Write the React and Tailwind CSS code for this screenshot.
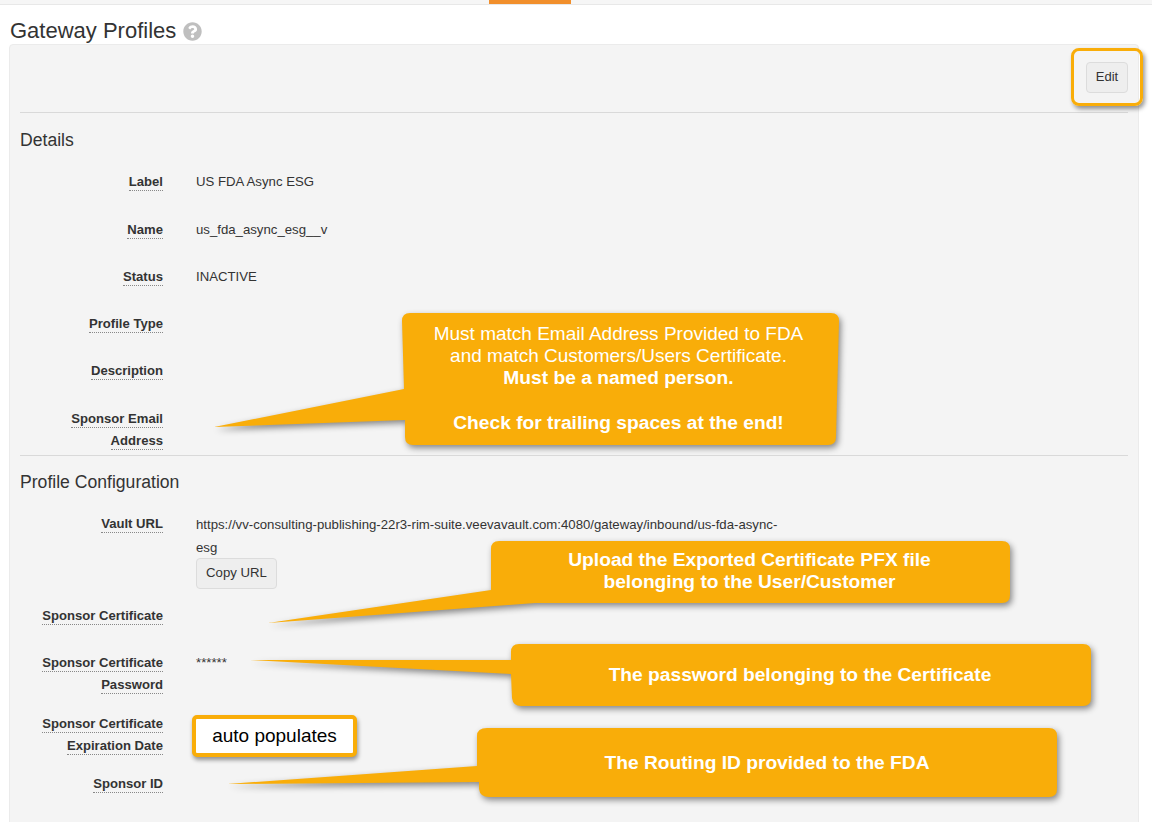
import React from 'react';
import { FaQuestionCircle } from 'react-icons/fa';

const Row = ({ label, children, cls }) => (
  <div className={`flex ${cls}`}>
    <div className="w-[143px] shrink-0 pl-[18px] text-right leading-[22px] text-[13.1px] font-bold text-[#333]">
      <span className="border-b border-dotted border-[#888] pb-[1px]">{label}</span>
    </div>
    <div className="ml-[33px] w-[590px] leading-[22px] text-[#333]">{children}</div>
  </div>
);

const Shape = ({ d }) => (
  <svg className="absolute left-0 top-0 w-[1152px] h-[822px] pointer-events-none drop-shadow-[2px_3px_3px_rgba(0,0,0,0.45)]" viewBox="0 0 1152 822">
    <path d={d} fill="#f9ad09" />
  </svg>
);

export default function App() {
  return (
    <div className="relative w-[1152px] h-[822px] overflow-hidden bg-white text-[13.2px] font-['Liberation_Sans',Arial,sans-serif]">
      <div className="h-[5px] bg-[#f6f6f6] border-b border-[#e8e8e8] flex">
        <div className="ml-[489px] w-[82px] h-[4px] bg-[#f18f2c]" />
      </div>
      <div className="ml-[10px] mt-[12px] h-[27px] flex items-center gap-[7px]">
        <span className="text-[22px] leading-[27px] text-[#333]">Gateway Profiles</span>
        <FaQuestionCircle className="text-[#bfbfbf] w-[19px] h-[19px] mt-[1px]" />
      </div>
      <div className="ml-[9px] w-[1130px] h-[800px] bg-[#f4f4f4] border border-[#ebebeb] rounded-[4px] px-[10px]">
        <div className="h-[68px] border-b border-[#d9d9d9] flex justify-end items-start pt-[17px]">
          <button className="w-[42px] h-[31px] pb-[2px] bg-[#eeeeee] border border-[#dcdcdc] rounded-[4px] text-[13px] text-[#333]">Edit</button>
        </div>
        <div className="text-[17.6px] leading-[22px] text-[#333] mt-[16px]">Details</div>
        <Row label="Label" cls="mt-[20px] h-[48px]">US FDA Async ESG</Row>
        <Row label="Name" cls="h-[47px]">us_fda_async_esg__v</Row>
        <Row label="Status" cls="h-[47px]">INACTIVE</Row>
        <Row label="Profile Type" cls="h-[47px]" />
        <Row label="Description" cls="h-[48px]" />
        <Row label="Sponsor Email Address" cls="h-[47px]" />
        <div className="border-t border-[#d9d9d9]" />
        <div className="text-[17.6px] leading-[22px] text-[#333] mt-[15px]">Profile Configuration</div>
        <Row label="Vault URL" cls="mt-[20px] h-[92px]">
          <div className="leading-[23px] whitespace-nowrap">https://vv-consulting-publishing-22r3-rim-suite.veevavault.com:4080/gateway/inbound/us-fda-async-</div>
          <div className="leading-[23px]">esg</div>
          <button className="block -mt-[1px] w-[81px] h-[31px] pb-[1px] bg-[#eeeeee] border border-[#dcdcdc] rounded-[4px] text-[#333]">Copy URL</button>
        </Row>
        <Row label="Sponsor Certificate" cls="h-[47px]" />
        <Row label="Sponsor Certificate Password" cls="h-[61px]">******</Row>
        <Row label="Sponsor Certificate Expiration Date" cls="h-[60px]" />
        <Row label="Sponsor ID" />
      </div>

      <div className="absolute left-[1071px] top-[48px] w-[72px] h-[58px] border-[3px] border-[#f9ad09] rounded-[8px] shadow-[2px_3px_4px_rgba(0,0,0,0.4)]" />

      <Shape d="M410 313H831Q839 313 839 321L836 437Q836 445 828 445H413Q405 445 405 437L405 420L214 427L404 389L402 321Q402 313 410 313Z" />
      <div className="absolute left-[400px] top-[323px] w-[437px] text-center text-white text-[19px] leading-[22px]">
        <div>Must match Email Address Provided to FDA</div>
        <div>and match Customers/Users Certificate.</div>
        <div className="font-bold text-[19.2px]">Must be a named person.</div>
        <div className="font-bold text-[19.2px] mt-[23px]">Check for trailing spaces at the end!</div>
      </div>

      <Shape d="M499 541H1002Q1010 541 1010 549V595Q1010 603 1002 603H535L268 623L491 590V549Q491 541 499 541Z" />
      <div className="absolute left-[490px] top-[549px] w-[519px] text-center text-white text-[19.2px] leading-[22px] font-bold">
        <div>Upload the Exported Certificate PFX file</div>
        <div>belonging to the User/Customer</div>
      </div>

      <Shape d="M519 644H1083Q1091 644 1091 652V698Q1091 706 1083 706H521Q513 706 512 698L511 674L250 660H511V652Q511 644 519 644Z" />
      <div className="absolute left-[511px] top-[663px] w-[578px] text-center text-white text-[19.2px] leading-[23px] font-bold">The password belonging to the Certificate</div>

      <Shape d="M487 728H1049Q1057 728 1057 736V789Q1057 797 1049 797H489Q480 797 479 789L479 782L227 784L477 766V736Q477 728 487 728Z" />
      <div className="absolute left-[477px] top-[751px] w-[580px] text-center text-white text-[19.2px] leading-[23px] font-bold">The Routing ID provided to the FDA</div>

      <div className="absolute left-[192px] top-[715px] w-[165px] h-[42px] bg-white border-[4px] border-[#f9ad09] rounded-[5px] shadow-[1px_3px_4px_rgba(0,0,0,0.4)] flex items-center justify-center text-[19px] text-black">auto populates</div>
    </div>
  );
}
